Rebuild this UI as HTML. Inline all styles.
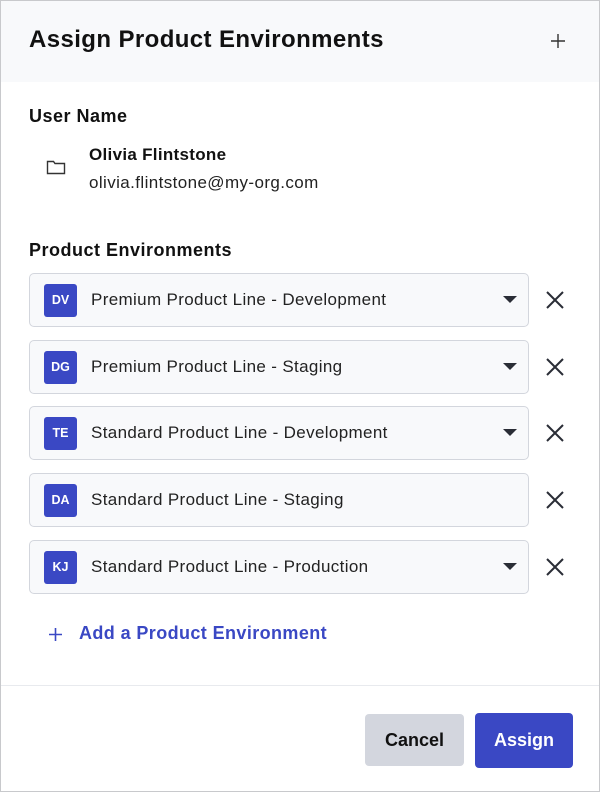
<!DOCTYPE html>
<html><head><style>
*{box-sizing:border-box;margin:0;padding:0}
body{width:600px;height:792px;background:#fff;font-family:"Liberation Sans",Arial,sans-serif;color:#1a1a1a;position:relative;overflow:hidden}
.frame{position:absolute;left:0;top:0;width:600px;height:792px;border:1.5px solid #c8c9cc}
.header{position:absolute;left:1px;top:1px;width:598px;height:81px;background:#f8f9fb}
.title{position:absolute;left:29px;top:26px;font-size:24px;font-weight:bold;color:#111;letter-spacing:0.4px}
.lbl{position:absolute;left:29px;font-size:18px;font-weight:bold;color:#111;letter-spacing:0.5px}
.row{position:absolute;left:29px;width:500px;height:54px;border:1.5px solid #d3d6dd;border-radius:5px;background:#f8f9fb}
.badge{position:absolute;left:14px;top:10px;width:33px;height:33px;border-radius:3px;background:#3a48c4;color:#fff;font-size:12.5px;font-weight:bold;text-align:center;line-height:33px}
.rt{position:absolute;left:61px;top:16px;font-size:17px;color:#222;letter-spacing:0.35px}
.arr{position:absolute;left:473px;top:22px;width:0;height:0;border-left:7px solid transparent;border-right:7px solid transparent;border-top:7px solid #2a2d36}
.x{position:absolute;left:545px}
.btn{position:absolute;border-radius:4px;font-size:18px;font-weight:bold;text-align:center}
</style></head><body>
<div class="frame"></div>
<div class="header"></div>
<div class="title">Assign Product Environments</div>
<svg style="position:absolute;left:551px;top:34px" width="14" height="14"><path d="M7 0v14M0 7h14" stroke="#333" stroke-width="1.4"/></svg>
<div class="lbl" style="top:106px">User Name</div>
<svg style="position:absolute;left:46px;top:159px" width="20" height="16" viewBox="0 0 20 16"><path d="M1.5 2.5h6l1.5 2h9.5v10h-17z" fill="none" stroke="#333" stroke-width="1.4"/></svg>
<div style="position:absolute;left:89px;top:145px;font-size:17px;font-weight:bold;color:#111;letter-spacing:0.3px">Olivia Flintstone</div>
<div style="position:absolute;left:89px;top:173px;font-size:17px;color:#222;letter-spacing:0.4px">olivia.flintstone@my-org.com</div>
<div class="lbl" style="top:240px">Product Environments</div>

<div class="row" style="top:273px"><div class="badge">DV</div><div class="rt">Premium Product Line - Development</div><div class="arr"></div></div>
<div class="row" style="top:340px"><div class="badge">DG</div><div class="rt">Premium Product Line - Staging</div><div class="arr"></div></div>
<div class="row" style="top:406px"><div class="badge">TE</div><div class="rt">Standard Product Line - Development</div><div class="arr"></div></div>
<div class="row" style="top:473px"><div class="badge">DA</div><div class="rt">Standard Product Line - Staging</div></div>
<div class="row" style="top:540px"><div class="badge">KJ</div><div class="rt">Standard Product Line - Production</div><div class="arr"></div></div>

<svg class="x" style="top:290px" width="20" height="20"><path d="M2 2L18 18M18 2L2 18" stroke="#2a2d36" stroke-width="2"/></svg>
<svg class="x" style="top:357px" width="20" height="20"><path d="M2 2L18 18M18 2L2 18" stroke="#2a2d36" stroke-width="2"/></svg>
<svg class="x" style="top:423px" width="20" height="20"><path d="M2 2L18 18M18 2L2 18" stroke="#2a2d36" stroke-width="2"/></svg>
<svg class="x" style="top:490px" width="20" height="20"><path d="M2 2L18 18M18 2L2 18" stroke="#2a2d36" stroke-width="2"/></svg>
<svg class="x" style="top:557px" width="20" height="20"><path d="M2 2L18 18M18 2L2 18" stroke="#2a2d36" stroke-width="2"/></svg>

<svg style="position:absolute;left:48px;top:627px" width="15" height="15"><path d="M7.5 1v13M1 7.5h13" stroke="#3a48c4" stroke-width="1.6"/></svg>
<div style="position:absolute;left:79px;top:623px;font-size:18px;font-weight:bold;color:#3a48c4;letter-spacing:0.4px">Add a Product Environment</div>
<div style="position:absolute;left:1px;top:685px;width:598px;height:1px;background:#e8eaee"></div>
<div class="btn" style="left:365px;top:714px;width:99px;height:52px;background:#d3d6de;color:#111;line-height:52px">Cancel</div>
<div class="btn" style="left:475px;top:713px;width:98px;height:55px;background:#3a48c4;color:#fff;line-height:55px">Assign</div>
</body></html>
